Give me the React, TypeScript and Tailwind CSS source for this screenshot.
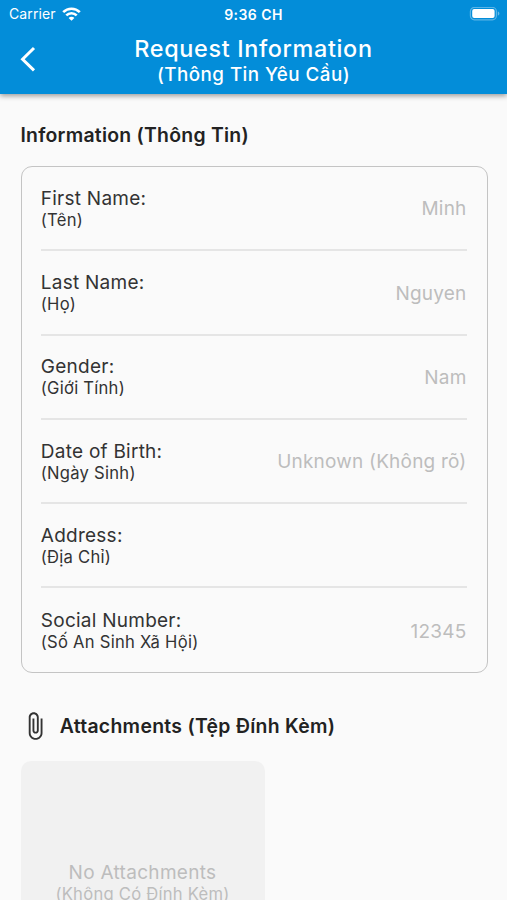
import React from "react";

type Field = { label: string; sub: string; value: string };

const fields: Field[] = [
  { label: "First Name:", sub: "(Tên)", value: "Minh" },
  { label: "Last Name:", sub: "(Họ)", value: "Nguyen" },
  { label: "Gender:", sub: "(Giới Tính)", value: "Nam" },
  { label: "Date of Birth:", sub: "(Ngày Sinh)", value: "Unknown (Không rõ)" },
  { label: "Address:", sub: "(Địa Chỉ)", value: "" },
  { label: "Social Number:", sub: "(Số An Sinh Xã Hội)", value: "12345" },
];

function WifiIcon() {
  return (
    <svg width="19" height="14" viewBox="0 0 19 14" fill="none" stroke="white" strokeWidth="2.6">
      <path d="M1.2 5.2C5.8 .6 13.2 .6 17.8 5.2" />
      <path d="M4.3 8.4C7.2 5.5 11.8 5.5 14.7 8.4" />
      <path d="M9.5 13.8L6.6 10.9C8.2 9.3 10.8 9.3 12.4 10.9Z" fill="white" stroke="none" />
    </svg>
  );
}

function BatteryIcon() {
  return (
    <svg width="32" height="14" viewBox="0 0 32 14">
      <rect x="1.4" y="0.4" width="26" height="12.4" rx="4" fill="none" stroke="white" strokeOpacity="0.35" strokeWidth="1.2" />
      <rect x="3.2" y="2.1" width="22.4" height="9" rx="2" fill="white" />
      <path d="M28.8 4.4c1 .4 1.6 1.2 1.6 2.2s-.6 1.8-1.6 2.2z" fill="white" fillOpacity="0.4" />
    </svg>
  );
}

function StatusBar() {
  return (
    <div className="grid h-[27px] grid-cols-[1fr_auto_1fr] items-center px-[6px] text-[14px] leading-none">
      <div className="flex items-center gap-[6px] pl-[3px]">
        <span className="tracking-[0.1px]">Carrier</span>
        <WifiIcon />
      </div>
      <span className="pt-[2px] text-center text-[14px] font-semibold tracking-[0.45px]">9:36 CH</span>
      <div className="flex justify-end">
        <BatteryIcon />
      </div>
    </div>
  );
}

function Header() {
  return (
    <header className="relative h-[94px] shrink-0 bg-[#038dd9] text-white shadow-[0_2px_5px_rgba(0,0,0,0.38)]">
      <StatusBar />
      <div className="grid grid-cols-[60px_1fr_60px] items-center pt-[8px]">
        <svg className="-mt-1 ml-5" width="16" height="26" viewBox="0 0 16 26" fill="none" stroke="white" strokeWidth="3">
          <path d="M14 2L2.6 13.2L14 24.4" />
        </svg>
        <div className="flex flex-col items-center whitespace-nowrap font-medium">
          <h1 className="text-[23.4px] leading-[27px] tracking-[0.65px]">Request Information</h1>
          <p className="text-[18.8px] leading-[25px] tracking-[0.45px]">(Thông Tin Yêu Cầu)</p>
        </div>
      </div>
    </header>
  );
}

function FieldRow({ field, last }: { field: Field; last: boolean }) {
  return (
    <div className={last ? "flex h-[84.3px] items-center justify-between" : "flex h-[84.3px] items-center justify-between border-b-2 border-[#e5e5e5]"}>
      <div className="pt-[0.4px] text-[#333333]">
        <div className="text-[19px] leading-[23px] tracking-[0.25px]">{field.label}</div>
        <div className="text-[16.6px] leading-[20px] tracking-[0.25px]">{field.sub}</div>
      </div>
      <div className="pt-[3px] text-[19px] tracking-[0.2px] text-[#bdbdbd]">{field.value}</div>
    </div>
  );
}

export default function App() {
  return (
    <div className="flex h-[900px] w-[507px] flex-col overflow-hidden bg-[#fafafa] font-['Inter',sans-serif]">
      <Header />
      <main className="pl-[20.5px] pr-[19.5px]">
        <h2 className="pt-[28px] text-[19.4px] font-semibold leading-[26px] tracking-[0.25px] text-[#222222]">Information (Thông Tin)</h2>
        <section className="mt-[18px] h-[507px] rounded-[11px] border border-[#c4c4c4] pl-[19.3px] pr-[20px]">
          {fields.map((field, i) => (
            <FieldRow key={field.label} field={field} last={i === fields.length - 1} />
          ))}
        </section>
        <div className="mt-[38px] flex h-[30px] items-center gap-[10px]">
          <svg className="-ml-[0.8px]" width="30" height="30" viewBox="0 0 24 24" fill="#333333">
            <path d="M16.5 6v11.5c0 2.21-1.79 4-4 4s-4-1.79-4-4V5c0-1.38 1.12-2.5 2.5-2.5s2.5 1.12 2.5 2.5v10.5c0 .55-.45 1-1 1s-1-.45-1-1V6H10v9.5c0 1.38 1.12 2.5 2.5 2.5s2.5-1.12 2.5-2.5V5c0-2.21-1.79-4-4-4S7 2.79 7 5v12.5c0 3.04 2.46 5.5 5.5 5.5s5.5-2.46 5.5-5.5V6h-1.5z" />
          </svg>
          <h2 className="pt-[2px] text-[19.4px] font-semibold tracking-[0.3px] text-[#222222]">Attachments (Tệp Đính Kèm)</h2>
        </div>
        <div className="mt-[20px] h-[244px] w-[244px] rounded-[10px] bg-[#f1f1f1] pt-[100px] text-center text-[#bdbdbd]">
          <div className="text-[19px] leading-[23px] tracking-[0.3px]">No Attachments</div>
          <div className="text-[16.6px] leading-[20px] tracking-[0.25px]">(Không Có Đính Kèm)</div>
        </div>
      </main>
    </div>
  );
}
